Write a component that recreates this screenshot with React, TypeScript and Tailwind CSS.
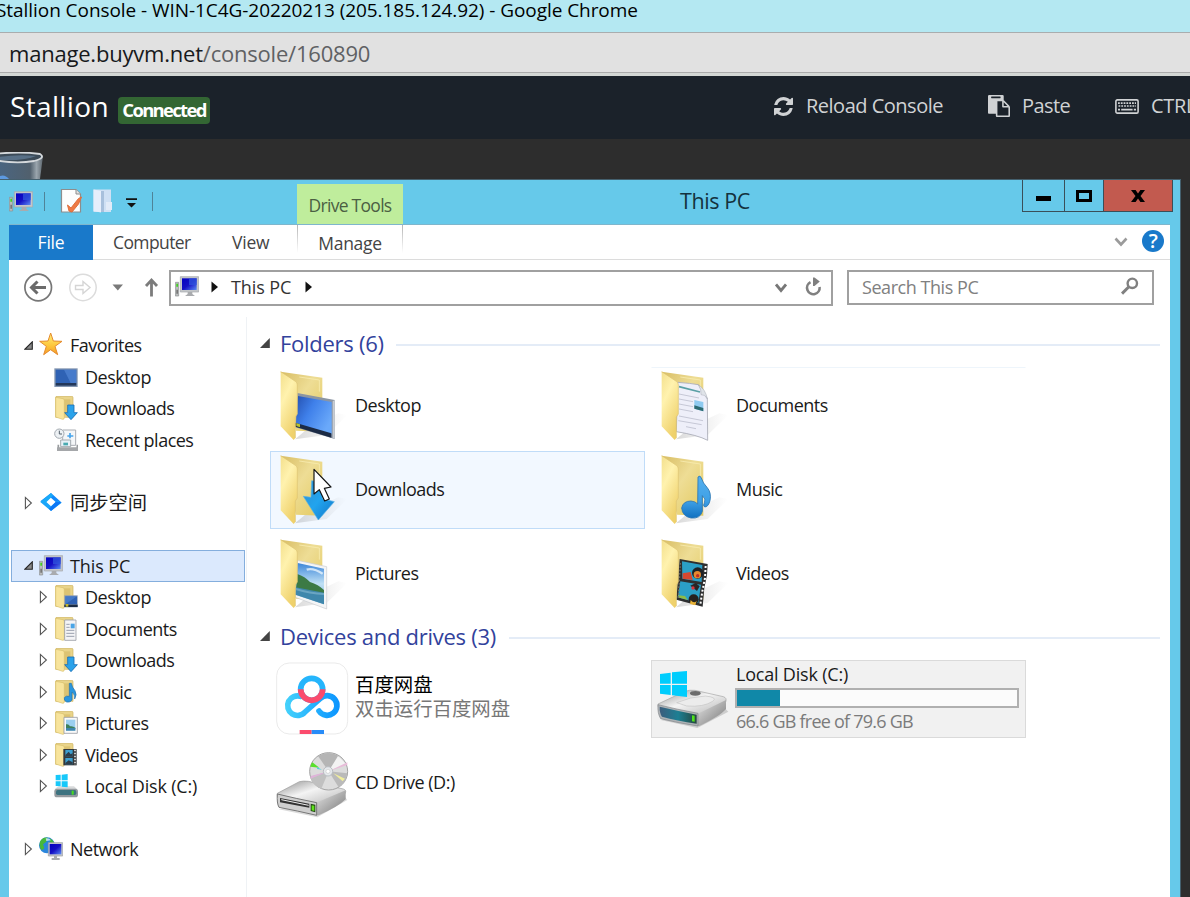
import React from "react";

type IconProps = { className?: string };

/* ---------- shared gradients ---------- */
function Gradients() {
  return (
    <svg className="absolute h-0 w-0" aria-hidden="true">
      <defs>
        <linearGradient id="flap" x1="0" y1="0" x2="0.5" y2="1">
          <stop offset="0" stopColor="#f3df8c" />
          <stop offset="0.4" stopColor="#fff2ae" />
          <stop offset="1" stopColor="#efd16c" />
        </linearGradient>
        <linearGradient id="back" x1="0" y1="0" x2="1" y2="1">
          <stop offset="0" stopColor="#d8bd64" />
          <stop offset="0.45" stopColor="#eedd95" />
          <stop offset="1" stopColor="#e3c95f" />
        </linearGradient>
        <linearGradient id="shade" x1="0" y1="0" x2="1" y2="0">
          <stop offset="0" stopColor="#555" stopOpacity="0.4" />
          <stop offset="1" stopColor="#777" stopOpacity="0" />
        </linearGradient>
        <linearGradient id="screen" x1="0" y1="0" x2="1" y2="0.6">
          <stop offset="0" stopColor="#2450b0" />
          <stop offset="0.45" stopColor="#3f80ea" />
          <stop offset="1" stopColor="#6aa9fa" />
        </linearGradient>
        <linearGradient id="arrow" x1="0" y1="0" x2="1" y2="1">
          <stop offset="0" stopColor="#2f8fd0" />
          <stop offset="0.5" stopColor="#22a4ee" />
          <stop offset="1" stopColor="#1276c8" />
        </linearGradient>
        <linearGradient id="note" x1="0" y1="0" x2="0" y2="1">
          <stop offset="0" stopColor="#55b0ee" />
          <stop offset="0.6" stopColor="#3ea0e6" />
          <stop offset="1" stopColor="#1070c0" />
        </linearGradient>
        <linearGradient id="photo" x1="0" y1="0" x2="0" y2="1">
          <stop offset="0" stopColor="#3c86d8" />
          <stop offset="0.5" stopColor="#bfe0f5" />
          <stop offset="1" stopColor="#7fb5d8" />
        </linearGradient>
        <linearGradient id="metal" x1="0" y1="0" x2="1" y2="1">
          <stop offset="0" stopColor="#8d8d8d" />
          <stop offset="0.45" stopColor="#f4f4f4" />
          <stop offset="1" stopColor="#b5b5b5" />
        </linearGradient>
        <linearGradient id="side" x1="0" y1="0" x2="1" y2="1">
          <stop offset="0" stopColor="#e6e6e6" />
          <stop offset="1" stopColor="#777" />
        </linearGradient>
        <linearGradient id="front" x1="0" y1="0" x2="1" y2="0">
          <stop offset="0" stopColor="#3c5c7c" />
          <stop offset="0.5" stopColor="#1d7f93" />
          <stop offset="1" stopColor="#26463e" />
        </linearGradient>
        <linearGradient id="navy" x1="0" y1="0" x2="1" y2="1">
          <stop offset="0" stopColor="#0402c0" />
          <stop offset="0.5" stopColor="#1510c4" />
          <stop offset="1" stopColor="#5a8cf4" />
        </linearGradient>
        <linearGradient id="cloud" gradientUnits="userSpaceOnUse" x1="75" y1="0" x2="238" y2="0">
          <stop offset="0" stopColor="#45d2fb" />
          <stop offset="1" stopColor="#0a94ff" />
        </linearGradient>
        <linearGradient id="star" x1="0" y1="0" x2="0" y2="1">
          <stop offset="0" stopColor="#fff07a" />
          <stop offset="0.6" stopColor="#fdc53a" />
          <stop offset="1" stopColor="#f49a2c" />
        </linearGradient>
        <linearGradient id="bin" x1="0" y1="0" x2="1" y2="0">
          <stop offset="0" stopColor="#4a6580" />
          <stop offset="0.7" stopColor="#51606d" />
          <stop offset="0.85" stopColor="#9aa5ad" />
          <stop offset="1" stopColor="#5c666e" />
        </linearGradient>
      </defs>
    </svg>
  );
}

/* ---------- large tile icons ---------- */
function BigFolder({ children }: { children?: React.ReactNode }) {
  return (
    <svg viewBox="45 144 225 228" className="h-[76px] w-[75px] shrink-0">
      <path d="M105 358L200 345L262 285L235 280L150 320Z" fill="url(#shade)" opacity="0.55" />
      <path d="M62 155L187 173V335L108 332Z" fill="url(#back)" />
      <path d="M118 171L178 180V215" fill="none" stroke="#f8ecb0" strokeWidth="2.5" />
      {children}
      <path d="M62 155L106 184Q112 188 112 195V282L106 291V354L101 360L62 319Z" fill="url(#flap)" />
      <path d="M62 155L106 184Q112 188 112 195V282L106 291V354" fill="none" stroke="#dcc271" strokeWidth="2" />
    </svg>
  );
}

const DesktopArt = () => (
  <g>
    <path d="M112 219L224 240V357L106 322Z" fill="#8b95a3" />
    <path d="M114 228L215 246V343L108 312Z" fill="url(#screen)" />
    <path d="M106 308L214 340V353L106 320Z" fill="#1c2b45" />
    <path d="M109 309l11 4v9l-11-4z" fill="#b7c12e" />
    <path d="M224 240v117l-6-3V244z" fill="#c7ccd2" />
  </g>
);
const DownloadArt = () => (
  <path d="M155 230L188 236V284L223 293L175 348L130 277L153 280Z" fill="url(#arrow)" stroke="#57b0e6" strokeWidth="2" />
);
const Pointer = () => (
  <path d="M162 196V270L178 257L194 291L208 285L193 253L213 249Z" fill="#fff" stroke="#111" strokeWidth="3.5" strokeLinejoin="round" />
);
const PictureArt = () => (
  <g>
    <path d="M112 217L200 236V363L106 328Z" fill="#f4f5f6" stroke="#c8ccd0" strokeWidth="2" />
    <path d="M113 225L192 242V349L106 320Z" fill="url(#photo)" />
    <path d="M112 258Q135 266 150 282Q175 290 192 306V318L108 302Z" fill="#3c7a45" />
    <path d="M107 298L192 314V349L106 320Z" fill="#3f87ac" />
    <path d="M107 303Q150 316 192 318" stroke="#87b9d2" strokeWidth="6" fill="none" opacity="0.6" />
    <path d="M140 245q20-6 48 12" stroke="#e8f4fc" strokeWidth="7" fill="none" opacity="0.8" />
  </g>
);
const DocArt = () => (
  <g>
    <path d="M110 187Q150 190 172 194L199 235L200 361Q170 345 106 335Z" fill="#eeeff9" stroke="#a7aab4" strokeWidth="2.5" />
    <path d="M172 194Q182 210 180 224Q192 222 199 237Q194 208 172 194Z" fill="#dfe3e8" stroke="#a7aab4" strokeWidth="1.5" />
    <path d="M114 200L177 216" stroke="#5aa0a5" strokeWidth="5" />
    <path d="M114 222l60 12M114 237l42 8M114 252l42 8M114 267l42 8M114 288l72 14M112 302l70 12M135 320l30 6" stroke="#c6c8d6" strokeWidth="3" />
    <path d="M160 240L187 246V274L160 266Z" fill="#8ecaf0" />
    <path d="M160 256L187 264V274L160 266Z" fill="#2c6a72" />
  </g>
);
const MusicArt = () => (
  <path
    d="M171 219Q177 212 181 222Q186 238 198 250Q212 266 207 290Q202 309 191 309Q185 305 190 297Q196 284 184 275V322Q178 345 150 342Q124 337 122 312Q126 291 150 291Q163 292 170 300Z"
    fill="url(#note)"
    stroke="#2b76b2"
    strokeWidth="2.5"
  />
);
const VideoArt = () => (
  <g>
    <path d="M116 213L200 228L198 262L190 300L185 356L106 335Z" fill="#2e2f30" />
    <path d="M123 220L184 231L182 282L124 272Z" fill="#2b9fc6" />
    <path d="M118 280L180 290L172 345L110 328Z" fill="#2b9fc6" />
    <path d="M125 256l24-4 6 24-30-4z" fill="#d5482f" />
    <circle cx="170" cy="255" r="17" fill="#1f2226" />
    <circle cx="169" cy="260" r="11" fill="#e6892e" />
    <circle cx="170" cy="263" r="5" fill="#c02b26" />
    <path d="M148 293l16-8 12 10-8 14z" fill="#2a2426" />
    <circle cx="156" cy="300" r="5" fill="#d8343e" />
    <circle cx="158" cy="334" r="15" fill="#26221f" />
    <path d="M149 336q10 12 18 2l-4 14-16-4z" fill="#e9b337" />
    <path d="M112 322l20 2 8 12-30-8z" fill="#8dbb47" />
    <path d="M194 234L192 270L184 310L178 350" stroke="#fff" strokeWidth="6" strokeDasharray="6 6" fill="none" />
    <path d="M118 225L112 330" stroke="#6d6a61" strokeWidth="4" strokeDasharray="5 5" />
  </g>
);

function BaiduIcon() {
  return (
    <svg viewBox="45 123 225 228" className="h-[76px] w-[75px] shrink-0">
      <rect x="50" y="129" width="213" height="213" rx="38" fill="#fff" stroke="#e6e6e6" strokeWidth="2.5" />
      <circle cx="155" cy="208" r="33" fill="none" stroke="#25b5fc" strokeWidth="17" />
      <path
        d="M122 229A29.5 29.5 0 1 0 135 276L181 235A29.5 29.5 0 1 1 177 273"
        fill="none"
        stroke="url(#cloud)"
        strokeWidth="17"
        strokeLinecap="round"
        strokeLinejoin="round"
      />
      <path d="M122 208A33 33 0 0 0 188 208" fill="none" stroke="#fb4b6d" strokeWidth="17" />
      <path d="M119 330h36v12h-36z" fill="#fb4b6d" />
      <path d="M155 330h37v12h-37z" fill="#288cf8" />
    </svg>
  );
}

function CdIcon() {
  return (
    <svg viewBox="45 375 225 228" className="h-[76px] w-[75px] shrink-0">
      <path d="M56 568L172 592L262 540L250 525Z" fill="#999" opacity="0.35" />
      <path d="M52 520L118 485Q130 482 145 484L250 507Q260 510 256 520L168 552L52 530Z" fill="url(#metal)" stroke="#9a9a9a" strokeWidth="2" />
      <path d="M168 548L257 511V538Q235 560 176 586H168Z" fill="url(#side)" />
      <path d="M52 522Q110 536 170 548V586Q110 572 57 562Q50 550 52 522Z" fill="#cfcfcf" stroke="#777" strokeWidth="3" />
      <path d="M60 534L148 551V563L60 547Z" fill="#333" />
      <path d="M64 539L146 556" stroke="#eee" strokeWidth="3" />
      <path d="M152 551l14 3v23l-14-4z" fill="#244b15" />
      <path d="M155 556l8 1v16l-8-2z" fill="#5fe51d" />
      <ellipse cx="206" cy="454" rx="57" ry="56" fill="#dcdcdc" stroke="#a2a2a2" strokeWidth="3" />
      <path d="M206 454L174 408Q205 390 237 408Z" fill="#b5b5b5" />
      <path d="M206 454L150 470Q158 498 184 506Z" fill="#c0c0c0" />
      <path d="M206 454L262 460Q258 490 236 502Z" fill="#bababa" />
      <path d="M206 454L234 408L258 432Z" fill="#f3f3f3" />
      <path d="M178 443L151 440Q153 431 157 427Z" fill="#59e02c" />
      <path d="M186 449L172 447L170 441Z" fill="#46cfe0" />
      <path d="M206 454L262 427V435Z" fill="#e7bcd8" />
      <path d="M220 460L255 476L248 484Z" fill="#f1ee9c" />
      <path d="M206 454L152 476V468Z" fill="#dfb3d9" />
      <circle cx="204" cy="454" r="14" fill="#e6e9ec" stroke="#b9bdc2" strokeWidth="3" />
      <circle cx="204" cy="454" r="6" fill="#fff" stroke="#aaa" />
    </svg>
  );
}

function DiskIcon() {
  return (
    <svg viewBox="48 63 225 228" className="h-[76px] w-[75px] shrink-0">
      <path d="M62 240L172 264L265 215L250 200Z" fill="#999" opacity="0.4" />
      <path d="M54 192L130 156Q150 148 165 151L250 170Q262 174 257 186L175 224L54 200Z" fill="url(#metal)" stroke="#a5a5a5" strokeWidth="2" />
      <path d="M110 188Q150 170 196 168Q235 172 218 184Q190 202 140 198Z" fill="#ececec" stroke="#c4c4c4" strokeWidth="2" />
      <ellipse cx="166" cy="160" rx="16" ry="7" fill="#6c6c6c" />
      <path d="M172 222L258 180V207Q240 228 178 258H172Z" fill="url(#side)" />
      <path d="M54 194Q110 208 174 220V258Q110 248 62 236Q52 220 54 194Z" fill="#aeb2b5" stroke="#82878b" strokeWidth="2" />
      <path d="M59 200Q110 212 170 224V251Q110 242 66 230Q58 218 59 200Z" fill="url(#front)" />
      <path d="M156 226l8 1v18l-8-1z" fill="#51e31b" />
      <path d="M60 102L92 98V131H60zM96 97L141 93V131H96zM60 135H92V165L60 161zM96 135H141V171L96 166z" fill="#00cdfd" />
    </svg>
  );
}

/* ---------- small tree icons ---------- */
function SmallFolder({ children }: { children?: React.ReactNode }) {
  return (
    <svg viewBox="0 0 72 72" className="h-6 w-6 shrink-0">
      <path d="M5 4Q5 1 9 1H53Q57 1 57 5V64H5Z" fill="#e9d48a" stroke="#cdb25d" strokeWidth="2" />
      <path d="M30 10H49V58H30Z" fill="#dcc372" />
      <path d="M5 4L27 8Q31 9 31 14V64Q31 71 26 70L5 63Z" fill="#f8e49c" stroke="#d8bf6d" strokeWidth="2" />
      {children}
    </svg>
  );
}
const SmDesktop = () => (
  <SmallFolder>
    <path d="M31 31H71V67H31Z" fill="#8b9bb2" />
    <path d="M34 34H69V58H34Z" fill="#2f62b4" />
    <path d="M34 34H69L34 58Z" fill="#5489d6" opacity="0.6" />
    <path d="M31 59H71V66H31Z" fill="#1c2c44" />
    <path d="M35 57h8v8h-8z" fill="#c2b52c" />
  </SmallFolder>
);
const SmDoc = () => (
  <SmallFolder>
    <path d="M32 9H66V70H32Z" fill="#f4f4f6" stroke="#9b9fa6" strokeWidth="2.5" />
    <path d="M37 22h10M37 31h10M37 40h24M37 49h24M37 58h24" stroke="#9aa0ae" strokeWidth="3" />
    <path d="M50 20h12v14H50z" fill="#4aa4e6" />
  </SmallFolder>
);
const SmDownload = () => (
  <SmallFolder>
    <path d="M41 27H60V50H70L51 71L32 50H41Z" fill="#2aa2ea" stroke="#1a6fb6" strokeWidth="2.5" />
  </SmallFolder>
);
const SmMusic = () => (
  <SmallFolder>
    <path d="M46 10H52Q54 22 63 32Q70 44 62 57Q64 44 54 36V60Q50 68 38 66Q29 62 31 53Q36 46 46 49Z" fill="#2a96de" stroke="#2673ae" strokeWidth="2" />
  </SmallFolder>
);
const SmPicture = () => (
  <SmallFolder>
    <path d="M30 19H70V67H30Z" fill="#fafafa" stroke="#9b9fa6" strokeWidth="2.5" />
    <path d="M36 26H64V59H36Z" fill="#9bcff0" />
    <path d="M36 40Q44 38 48 46Q56 44 64 50V54H36Z" fill="#3e805a" />
    <path d="M36 51H64V59H36Z" fill="#3f86ad" />
  </SmallFolder>
);
const SmVideo = () => (
  <SmallFolder>
    <path d="M28 18H68V67H28Z" fill="#34383b" />
    <path d="M34 21H56V40H34ZM34 45H56V64H34Z" fill="#3d9fd0" />
    <path d="M34 36l10-10 6 8 6-4v10H34zM34 60l10-8 12 6v6H34z" fill="#2c3d4a" />
    <path d="M63 20V66" stroke="#e5e5e5" strokeWidth="5" strokeDasharray="5 4" />
  </SmallFolder>
);
const SmStar = () => (
  <svg viewBox="0 0 72 72" className="mb-[3px] h-6 w-6 shrink-0">
    <path d="M35 3L43 27L69 28L48 43L56 68L35 53L14 68L22 43L2 28L27 27Z" fill="url(#star)" stroke="#e58b2d" strokeWidth="3" strokeLinejoin="round" />
  </svg>
);
const SmScreen = () => (
  <svg viewBox="0 0 72 72" className="h-6 w-6 shrink-0">
    <path d="M1 10H71V66H1Z" fill="#8295b0" />
    <path d="M5 14H67V54H5Z" fill="#2f62b4" />
    <path d="M30 14H67V54H50Z" fill="#5f94e2" opacity="0.5" />
    <path d="M5 54H67V62H5Z" fill="#22375a" />
  </svg>
);
const SmRecent = () => (
  <svg viewBox="0 0 72 72" className="h-6 w-6 shrink-0">
    <path d="M26 6H65V52H26Z" fill="#f4f6f8" stroke="#a9adb2" strokeWidth="3" />
    <path d="M40 24h18M48 15v16" stroke="#45a4ec" strokeWidth="5" />
    <path d="M20 36H50V56H20Z" fill="#e6f1f8" stroke="#a4abb0" strokeWidth="3" />
    <path d="M28 44h14v8H28z" fill="#49aab1" />
    <path d="M13 50V62H70V50" stroke="#989b9e" strokeWidth="5" fill="none" />
    <path d="M9 58H72V69H9Z" fill="#a5a7aa" />
    <circle cx="16" cy="17" r="14" fill="#edf1f4" stroke="#a3a9b0" strokeWidth="3" />
    <path d="M16 8v10h8" stroke="#55606c" strokeWidth="3" fill="none" />
  </svg>
);
const SmSync = () => (
  <svg viewBox="0 0 72 72" className="mb-px h-6 w-6 shrink-0">
    <path d="M36 9L66 36H50L34 22L20 36L12 38L4 34Z" fill="#1189fb" />
    <path d="M36 63L4 36H22L36 49L50 36L58 34L68 38Z" fill="#1aa5fa" />
    <path d="M4 36L36 9L42 17L20 38Z" fill="#19aaf8" />
    <path d="M50 36L68 36L36 63L30 56Z" fill="#0c76f5" />
  </svg>
);
const SmPC = ({ className = "h-6 w-6" }: IconProps) => (
  <svg viewBox="0 0 72 72" className={`${className} shrink-0`}>
    <path d="M1 22H11V63H1Z" fill="#b9bcbd" stroke="#8b8e90" strokeWidth="2" />
    <path d="M4 26h5v9H4z" fill="#42d21f" />
    <path d="M4 44h5v12H4z" fill="#777" />
    <path d="M16 5H71V51H16Z" fill="#c3c6c9" stroke="#a3a6aa" strokeWidth="2" />
    <path d="M21 10H65V45H21Z" fill="url(#navy)" />
    <path d="M42 10H65V30H42Z" fill="#2f55dc" opacity="0.75" />
    <path d="M38 51H52V57L60 63H30L38 57Z" fill="#a9abae" />
  </svg>
);
const SmDisk = () => (
  <svg viewBox="0 0 72 72" className="h-6 w-6 shrink-0">
    <path d="M6 42L14 37H60L70 46H2Z" fill="#d8dadb" />
    <rect x="1" y="44" width="71" height="26" rx="8" fill="#949a9e" />
    <rect x="6" y="48" width="61" height="15" rx="5" fill="#3d7380" />
    <path d="M53 50h6v12h-6z" fill="#48de1c" />
    <path d="M5 3L20 2V19H5zM23 2L41 0V19H23zM5 22H20V37L5 36zM23 22H41V40L23 38z" fill="#17c8fa" />
  </svg>
);
const SmNetwork = () => (
  <svg viewBox="0 0 72 72" className="h-6 w-6 shrink-0">
    <circle cx="24" cy="25" r="24" fill="#2a86dc" />
    <path d="M4 12Q12 0 26 2L22 14L12 22L16 34L8 40Q-2 28 4 12ZM32 4Q44 10 47 22L34 20Z" fill="#47b83a" />
    <path d="M20 4q10-2 16 6l-14 2z" fill="#d9f0fa" opacity="0.8" />
    <path d="M28 17H71V57H28Z" fill="#c3c6cb" stroke="#9a9da2" strokeWidth="2" />
    <path d="M32 21H67V52H32Z" fill="url(#navy)" />
    <path d="M45 57h9v6h8v6H38v-6h7z" fill="#a9abae" />
  </svg>
);

const OpenTri = () => (
  <svg viewBox="0 0 9 9" className="h-[9px] w-[9px] shrink-0">
    <path d="M8.3 0.8V8.3H0.8Z" fill="#8a8a8a" stroke="#262626" strokeWidth="1.1" />
  </svg>
);
const ClosedTri = () => (
  <svg viewBox="0 0 9 14" className="h-[14px] w-[9px] shrink-0">
    <path d="M1.4 1.4V12.6L7.4 7Z" fill="#fff" stroke="#555" strokeWidth="1.1" />
  </svg>
);

/* ---------- tree ---------- */
type Row = {
  icon: React.ReactNode;
  label: string;
  level: 1 | 2;
  mark?: "open" | "closed";
  on?: boolean;
  text?: string;
};

function TreeRow({ icon, label, level, mark, on, text = "text-[18px] tracking-[-0.5px]" }: Row) {
  return (
    <div
      className={`flex h-[31.5px] items-center border ${level === 1 ? "pl-3" : "pl-[27px]"} ${
        on ? "border-[#84aedd] bg-[#dbe9fd]" : "border-transparent"
      }`}
    >
      <span className="mr-1.5 flex w-[9px] justify-center">
        {mark === "open" ? <OpenTri /> : mark === "closed" ? <ClosedTri /> : null}
      </span>
      {icon}
      <span className={`ml-[7px] leading-6 text-[#1a1a1a] ${text}`}>{label}</span>
    </div>
  );
}
const Gap = () => <div className="h-[31.5px]" />;

function Tile({ art, label, className = "border-transparent" }: { art: React.ReactNode; label: string; className?: string }) {
  return (
    <div className={`flex h-[78px] w-[375px] items-center border pl-1 ${className}`}>
      {art}
      <span className="ml-[5px] pb-0.5 text-[18px] leading-6 tracking-[-0.5px] text-[#1a1a1a]">{label}</span>
    </div>
  );
}

function SectionHead({ title, width }: { title: string; width: string }) {
  return (
    <div className="flex h-[30px] items-center">
      <svg viewBox="0 0 10 10" className="-ml-px h-2.5 w-2.5 shrink-0">
        <path d="M9.8 0V10H0Z" fill="#444" />
      </svg>
      <span className={`ml-2.5 shrink-0 whitespace-nowrap text-[22px] leading-[30px] tracking-[-0.27px] text-[#32429c] ${width}`}>{title}</span>
      <div className="mt-[3px] h-0.5 flex-1 bg-[#e4ecf7]" />
    </div>
  );
}

export default function App() {
  return (
    <div className="flex h-[897px] w-[1190px] flex-col overflow-hidden whitespace-nowrap bg-[#2d2d2d] [font-family:'Open_Sans','Noto_Sans_CJK_SC',sans-serif]">
      <Gradients />

      <header className="h-[33px] shrink-0 border-b border-[#a9adae] bg-[#b4e8f2]">
        <div className="-ml-1 text-[19px] leading-5 tracking-[-0.06px] text-black">
          Stallion Console - WIN-1C4G-20220213 (205.185.124.92) - Google Chrome
        </div>
      </header>
      <div className="h-[40px] shrink-0 border-b border-[#aaaaaa] bg-[#e1e1e1] pl-[9px] text-[22px] leading-[40px] tracking-[-0.21px] text-[#5f6164]">
        <span className="text-[#17191c]">manage.buyvm.net</span>/console/160890
      </div>
      <div className="h-[3px] shrink-0 bg-[#d3d7d4]" />

      <nav className="flex h-[63px] shrink-0 items-center bg-[#1b222a] pb-[3px] pl-2.5">
        <span className="w-[108px] shrink-0 text-[28px] leading-9 tracking-[0.35px] text-white">Stallion</span>
        <span className="mt-2 flex h-[27px] w-[92px] shrink-0 items-center justify-center rounded bg-[#336633] text-[18.5px] font-bold tracking-[-1.7px] text-white">
          Connected
        </span>
        <div className="ml-[564px] flex shrink-0 items-center text-[20px] text-[#d0d2d4]">
          <svg viewBox="0 0 1536 1536" className="h-[19px] w-[19px] shrink-0" fill="currentColor">
            <path d="M1511 928q0 5-1 7-64 268-268 434.5t-478 166.5q-146 0-282.5-55t-243.5-157l-129 129q-19 19-45 19t-45-19-19-45v-448q0-26 19-45t45-19h448q26 0 45 19t19 45-19 45l-137 137q71 66 161 102t187 36q134 0 250-65t186-179q11-17 53-117 8-23 30-23h192q13 0 22.5 9.5t9.5 22.5zm25-800v448q0 26-19 45t-45 19h-448q-26 0-45-19t-19-45 19-45l138-138q-148-137-349-137-134 0-250 65t-186 179q-11 17-53 117-8 23-30 23h-199q-13 0-22.5-9.5t-9.5-22.5v-7q65-268 270-434.5t480-166.5q146 0 284 55.5t245 156.5l130-129q19-19 45-19t45 19 19 45z" />
          </svg>
          <span className="ml-[13px] w-[182px] tracking-[-0.5px]">Reload Console</span>
          <svg viewBox="0 0 1792 1792" className="h-[22px] w-[22px] shrink-0" fill="currentColor">
            <path d="M768 1664h896v-640h-416q-40 0-68-28t-28-68v-416h-384v1152zm256-1440v-64q0-13-9.5-22.5t-22.5-9.5h-704q-13 0-22.5 9.5t-9.5 22.5v64q0 13 9.5 22.5t22.5 9.5h704q13 0 22.5-9.5t9.5-22.5zm256 672h299l-299-299v299zm512 128v672q0 40-28 68t-68 28h-960q-40 0-68-28t-28-68v-160h-544q-40 0-68-28t-28-68v-1344q0-40 28-68t68-28h1088q40 0 68 28t28 68v328q21 13 36 28l408 408q28 28 48 76t20 88z" />
          </svg>
          <span className="ml-3 w-[93px] tracking-[-0.6px]">Paste</span>
          <svg viewBox="0 0 24 15" className="h-[15px] w-6 shrink-0" fill="none" stroke="currentColor">
            <rect x="0.9" y="0.9" width="22.2" height="13.2" rx="1.4" strokeWidth="1.6" />
            <path d="M3 4.2H21M3.5 7H21" strokeWidth="1.7" strokeDasharray="1.8 1" />
            <path d="M3 10.6H5M6.2 10.6H17.6M18.8 10.6H21" strokeWidth="1.7" />
          </svg>
          <span className="ml-3 tracking-[-0.3px]">CTRL</span>
        </div>
      </nav>

      <div className="flex h-10 shrink-0 items-end">
        <svg viewBox="0 0 44 27" className="h-[27px] w-11">
          <path d="M0 4H43L40 27H0Z" fill="url(#bin)" />
          <path d="M0 24q5-2 9 3H0z" fill="#5d9ae0" />
          <path d="M-6 2Q20-1 40 2Q46 6 34 9Q16 12-6 8Z" fill="#3c4b58" stroke="#d5d9dc" strokeWidth="1.8" />
          <path d="M-2 5Q18 2 36 4Q26 9-2 8Z" fill="#587087" />
        </svg>
      </div>

      {/* explorer window */}
      <div className="flex min-h-0 w-[1181px] flex-1 flex-col border-r border-t border-[#44606e] bg-[#66c9ea] pl-[9px] pr-2.5">
        <div className="flex h-[45px] shrink-0 border-b border-[#7fb6cc]">
          <div className="flex h-[42px] w-[288px] shrink-0 items-center">
            <SmPC className="mt-0.5 h-6 w-6" />
            <div className="ml-[11px] h-[19px] w-px shrink-0 bg-[#4f8398]" />
            <svg viewBox="0 0 24 26" className="ml-[15px] h-[26px] w-6 shrink-0">
              <path d="M1.5 1.5H16L20.5 6V24H1.5Z" fill="#fdfdfd" stroke="#8d8d8d" strokeWidth="1.2" />
              <path d="M16 1.5V6H20.5" fill="#e2e2e2" stroke="#8d8d8d" />
              <path d="M7.5 17l3.5 3 7.5-9.5 3-1.5-3 7-6.5 8-3-1z" fill="#ee7a45" stroke="#df6f3c" />
            </svg>
            <svg viewBox="0 0 20 24" className="ml-[9px] h-6 w-5 shrink-0">
              <path d="M0.5 0.5H18V23H0.5Z" fill="#cfe0f4" />
              <path d="M0.5 0.5L8 2V23.5L0.5 22Z" fill="#e6eefb" />
              <path d="M8 2h3v21H8z" fill="#a8c0dc" />
              <path d="M13 13h6v8h-6z" fill="#e2ebf8" />
            </svg>
            <svg viewBox="0 0 11 10" className="ml-[13px] mt-1 h-[10px] w-[11px] shrink-0">
              <path d="M0 0.2H11V2H0ZM1 5H10L5.5 9.5Z" fill="#111" />
            </svg>
            <div className="ml-[15px] h-[19px] w-px shrink-0 bg-[#4f8398]" />
          </div>
          <div className="mt-1 flex h-10 w-[106px] shrink-0 items-center justify-center bg-[#bfed9c] pt-0.5 text-[17.5px] tracking-[-0.72px] text-[#4b5f43]">Drive Tools</div>
          <div className="w-[277px] shrink-0" />
          <div className="w-[341.5px] shrink-0 text-[21.5px] leading-[42px] tracking-[-0.4px] text-[#14323e]">This PC</div>
          <div className="flex h-8 shrink-0 border-x border-b border-[#3a4f59]">
            <div className="flex w-[42px] items-end justify-center border-r border-[#3a4f59] pb-2.5">
              <div className="h-[5px] w-[15px] bg-black" />
            </div>
            <div className="flex w-[39px] items-center justify-center border-r border-[#3a4f59]">
              <div className="h-3 w-4 border-[3px] border-black" />
            </div>
            <div className="flex w-[68px] items-center justify-center bg-[#c25a4f]">
              <svg viewBox="0 0 14 12" className="h-3 w-3.5">
                <path d="M0 0H4.6L7 3.4L9.4 0H14L9.5 6L14 12H9.4L7 8.6L4.6 12H0L4.5 6Z" fill="#000" />
              </svg>
            </div>
          </div>
        </div>

        <div className="flex min-h-0 w-[1161px] flex-1 flex-col bg-white">
          {/* ribbon tabs */}
          <div className="flex h-[35px] shrink-0 items-center border-b border-[#dcdcdc] text-[17.5px] tracking-[-0.6px] text-[#444]">
            <div className="flex h-[35px] w-[84px] items-center justify-center bg-[#1979ca] tracking-[-0.2px] text-white">File</div>
            <div className="ml-5 w-[119px] pt-px">Computer</div>
            <div className="w-[65px] pt-px tracking-[-0.2px]">View</div>
            <div className="flex h-full w-[106px] items-start">
              <div className="h-7 w-px bg-gradient-to-b from-[#b5b5b5] to-white" />
              <div className="flex-1 pt-[5px] text-center tracking-[-0.3px]">Manage</div>
              <div className="h-7 w-px bg-gradient-to-b from-[#b5b5b5] to-white" />
            </div>
            <svg viewBox="0 0 14 10" className="ml-[711px] h-2.5 w-3.5">
              <path d="M1.5 1.5L7 7.5L12.5 1.5" fill="none" stroke="#9b9b9b" strokeWidth="2.6" />
            </svg>
            <div className="mb-0.5 ml-[14px] flex h-[22px] w-[22px] items-center justify-center rounded-full bg-[#1979ca] text-[20px] font-semibold text-white">?</div>
          </div>

          {/* address row */}
          <div className="flex h-[57px] shrink-0 items-start pt-[9.5px]">
            <svg viewBox="0 0 145 36" className="ml-[13px] h-9 w-[145px] shrink-0" fill="none">
              <circle cx="16.2" cy="17.5" r="13.3" stroke="#777" strokeWidth="1.7" />
              <path d="M9.5 17.5H24M15.5 11.5L9.5 17.5L15.5 23.5" stroke="#6b6b6b" strokeWidth="3" />
              <circle cx="61" cy="17.5" r="13.2" stroke="#dcdcdc" strokeWidth="1.5" />
              <path d="M53.5 15.5H61V11.5L68 17.5L61 23.5V19.5H53.5Z" stroke="#d5d5d5" strokeWidth="1.4" />
              <path d="M90.5 14.5H101L95.8 20.5Z" fill="#7a7a7a" />
              <path d="M129.5 26.5V11M124 16L129.5 10L135 16" stroke="#7c7c7c" strokeWidth="2.8" />
            </svg>
            <div className="ml-[2px] flex h-9 w-[664px] shrink-0 items-center border-2 border-[#a0a0a0] pb-px pl-1">
              <SmPC className="h-6 w-6" />
              <svg viewBox="0 0 8 12" className="ml-3 h-3 w-2">
                <path d="M0.5 0.5L7 6L0.5 11.5Z" fill="#111" />
              </svg>
              <span className="ml-3 w-[74px] text-[18px] tracking-[-0.1px] text-[#333]">This PC</span>
              <svg viewBox="0 0 8 12" className="h-3 w-2">
                <path d="M0.5 0.5L7 6L0.5 11.5Z" fill="#111" />
              </svg>
              <svg viewBox="0 0 12 10" className="ml-[462px] mt-0.5 h-2.5 w-3">
                <path d="M1 1.5L6 7.5L11 1.5" fill="none" stroke="#777" strokeWidth="2.8" />
              </svg>
              <svg viewBox="0 0 18 20" className="ml-[18px] h-5 w-[18px]">
                <path d="M5.5 5.2A6.3 6.3 0 1 0 14.6 10" fill="none" stroke="#808080" strokeWidth="2.6" />
                <path d="M8 0.5H9.5L14.8 4.6L9.5 9H8Z" fill="#808080" />
              </svg>
            </div>
            <div className="ml-[14px] flex h-[35px] w-[307px] shrink-0 items-center border-2 border-[#a0a0a0] pl-[13px]">
              <span className="w-[259px] text-[18px] tracking-[-0.45px] text-[#808080]">Search This PC</span>
              <svg viewBox="0 0 18 18" className="mb-0.5 h-[18px] w-[18px]" fill="none" stroke="#808080">
                <circle cx="11.3" cy="6.3" r="4.7" strokeWidth="2.4" />
                <path d="M7.6 10L1 16.6" strokeWidth="3" />
              </svg>
            </div>
          </div>

          {/* body */}
          <div className="flex min-h-0 flex-1">
            <aside className="w-[238px] shrink-0 overflow-hidden border-r border-[#eff2f5] pl-0.5 pr-px pt-[12.5px]">
              <TreeRow level={1} mark="open" icon={<SmStar />} label="Favorites" />
              <TreeRow level={2} icon={<SmScreen />} label="Desktop" />
              <TreeRow level={2} icon={<SmDownload />} label="Downloads" />
              <TreeRow level={2} icon={<SmRecent />} label="Recent places" />
              <Gap />
              <TreeRow level={1} mark="closed" icon={<SmSync />} label="同步空间" text="text-[19.3px]" />
              <Gap />
              <TreeRow level={1} mark="open" icon={<SmPC />} label="This PC" on text="text-[18px] tracking-[-0.1px]" />
              <TreeRow level={2} mark="closed" icon={<SmDesktop />} label="Desktop" />
              <TreeRow level={2} mark="closed" icon={<SmDoc />} label="Documents" />
              <TreeRow level={2} mark="closed" icon={<SmDownload />} label="Downloads" />
              <TreeRow level={2} mark="closed" icon={<SmMusic />} label="Music" />
              <TreeRow level={2} mark="closed" icon={<SmPicture />} label="Pictures" />
              <TreeRow level={2} mark="closed" icon={<SmVideo />} label="Videos" />
              <TreeRow level={2} mark="closed" icon={<SmDisk />} label="Local Disk (C:)" text="text-[18px] tracking-[-0.2px]" />
              <Gap />
              <TreeRow level={1} mark="closed" icon={<SmNetwork />} label="Network" />
            </aside>

            <main className="flex-1 overflow-hidden pl-[14px] pr-2.5 pt-[11px]">
              <SectionHead title="Folders (6)" width="w-[116px]" />
              <div className="ml-[9px] mt-[9px] grid w-[756px] grid-cols-2 gap-x-1.5 gap-y-1.5">
                <Tile art={<BigFolder><DesktopArt /></BigFolder>} label="Desktop" />
                <Tile art={<BigFolder><DocArt /></BigFolder>} label="Documents" className="border-x-transparent border-b-transparent border-t-[#eef5fb]" />
                <Tile art={<BigFolder><DownloadArt /><Pointer /></BigFolder>} label="Downloads" className="border-[#c0dcf8] bg-[#f2f8ff]" />
                <Tile art={<BigFolder><MusicArt /></BigFolder>} label="Music" />
                <Tile art={<BigFolder><PictureArt /></BigFolder>} label="Pictures" />
                <Tile art={<BigFolder><VideoArt /></BigFolder>} label="Videos" />
              </div>
              <div className="mt-2">
                <SectionHead title="Devices and drives (3)" width="w-[229px]" />
              </div>
              <div className="ml-[9px] mt-[9px] grid w-[756px] grid-cols-2 gap-x-1.5 gap-y-1.5">
                <div className="flex h-[78px] w-[375px] items-center border border-transparent pl-1">
                  <BaiduIcon />
                  <div className="ml-[5px] pb-1 text-[19.4px] leading-6">
                    <div className="text-black">百度网盘</div>
                    <div className="text-[#777]">双击运行百度网盘</div>
                  </div>
                </div>
                <div className="flex h-[78px] w-[375px] items-center border border-[#dadada] bg-[#f1f1f1] pl-1">
                  <DiskIcon />
                  <div className="ml-1 pb-1 text-[18px]">
                    <div className="pl-px leading-[26px] tracking-[-0.2px] text-[#1a1a1a]">Local Disk (C:)</div>
                    <div className="mt-px flex h-5 w-[284px] border-2 border-[#b0b0b0] bg-[#fbfbfb]">
                      <div className="w-[43px] bg-[#1088a8]" />
                    </div>
                    <div className="pl-px leading-[26px] tracking-[-0.77px] text-[#7b7b7b]">66.6 GB free of 79.6 GB</div>
                  </div>
                </div>
                <Tile art={<CdIcon />} label="CD Drive (D:)" />
              </div>
            </main>
          </div>
        </div>
      </div>
    </div>
  );
}
